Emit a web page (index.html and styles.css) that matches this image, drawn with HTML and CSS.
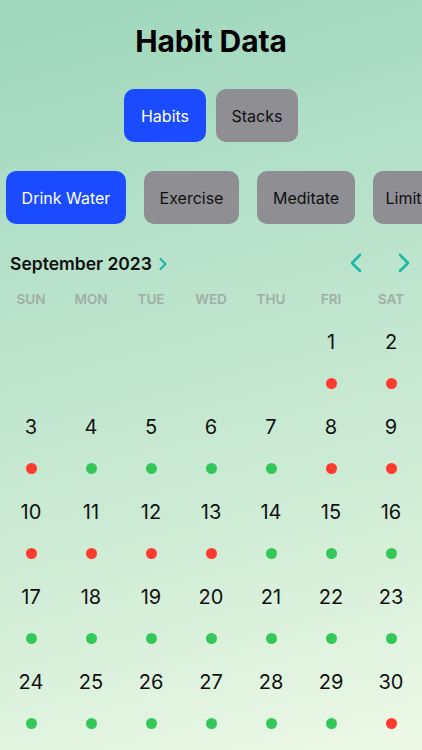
FILE: index.html
```html
<!DOCTYPE html>
<html>
<head>
<meta charset="utf-8">
<link rel="stylesheet" href="styles.css">
</head>
<body>
<div class="page">
  <h1 class="title">Habit Data</h1>
  <div class="segments">
    <div class="btn seg active">Habits</div>
    <div class="btn seg">Stacks</div>
  </div>
  <div class="habits">
    <div class="btn habit active w-drink">Drink Water</div>
    <div class="btn habit w-ex">Exercise</div>
    <div class="btn habit w-med">Meditate</div>
    <div class="btn habit w-lim">Limit Sugar</div>
  </div>
  <div class="month-head">
    <div class="month">September 2023
      <svg class="chev-small" width="10" height="14" viewBox="0 0 10 14"><path d="M2.5 2 L7.5 7 L2.5 12" fill="none" stroke="#1fb7a9" stroke-width="2.2" stroke-linecap="round" stroke-linejoin="round"/></svg>
    </div>
    <div class="nav">
      <svg width="14" height="22" viewBox="0 0 14 22"><path d="M11 3 L3 11 L11 19" fill="none" stroke="#1fb7a9" stroke-width="2.6" stroke-linecap="round" stroke-linejoin="round"/></svg>
      <svg width="14" height="22" viewBox="0 0 14 22"><path d="M3 3 L11 11 L3 19" fill="none" stroke="#1fb7a9" stroke-width="2.6" stroke-linecap="round" stroke-linejoin="round"/></svg>
    </div>
  </div>
  <div class="weekdays">
    <span>SUN</span><span>MON</span><span>TUE</span><span>WED</span><span>THU</span><span>FRI</span><span>SAT</span>
  </div>
  <div class="grid">
    <div class="cell"></div><div class="cell"></div><div class="cell"></div><div class="cell"></div><div class="cell"></div>
    <div class="cell"><span class="num">1</span><span class="dot red"></span></div>
    <div class="cell"><span class="num">2</span><span class="dot red"></span></div>

    <div class="cell"><span class="num">3</span><span class="dot red"></span></div>
    <div class="cell"><span class="num">4</span><span class="dot green"></span></div>
    <div class="cell"><span class="num">5</span><span class="dot green"></span></div>
    <div class="cell"><span class="num">6</span><span class="dot green"></span></div>
    <div class="cell"><span class="num">7</span><span class="dot green"></span></div>
    <div class="cell"><span class="num">8</span><span class="dot red"></span></div>
    <div class="cell"><span class="num">9</span><span class="dot red"></span></div>

    <div class="cell"><span class="num">10</span><span class="dot red"></span></div>
    <div class="cell"><span class="num">11</span><span class="dot red"></span></div>
    <div class="cell"><span class="num">12</span><span class="dot red"></span></div>
    <div class="cell"><span class="num">13</span><span class="dot red"></span></div>
    <div class="cell"><span class="num">14</span><span class="dot green"></span></div>
    <div class="cell"><span class="num">15</span><span class="dot green"></span></div>
    <div class="cell"><span class="num">16</span><span class="dot green"></span></div>

    <div class="cell"><span class="num">17</span><span class="dot green"></span></div>
    <div class="cell"><span class="num">18</span><span class="dot green"></span></div>
    <div class="cell"><span class="num">19</span><span class="dot green"></span></div>
    <div class="cell"><span class="num">20</span><span class="dot green"></span></div>
    <div class="cell"><span class="num">21</span><span class="dot green"></span></div>
    <div class="cell"><span class="num">22</span><span class="dot green"></span></div>
    <div class="cell"><span class="num">23</span><span class="dot green"></span></div>

    <div class="cell"><span class="num">24</span><span class="dot green"></span></div>
    <div class="cell"><span class="num">25</span><span class="dot green"></span></div>
    <div class="cell"><span class="num">26</span><span class="dot green"></span></div>
    <div class="cell"><span class="num">27</span><span class="dot green"></span></div>
    <div class="cell"><span class="num">28</span><span class="dot green"></span></div>
    <div class="cell"><span class="num">29</span><span class="dot green"></span></div>
    <div class="cell"><span class="num">30</span><span class="dot red"></span></div>
  </div>
</div>
</body>
</html>
```

FILE: styles.css
```css
* { box-sizing: border-box; }
html, body { margin: 0; padding: 0; }
body {
  width: 422px;
  height: 750px;
  overflow: hidden;
  font-family: "Inter", "Roboto", "Liberation Sans", sans-serif;
  background: linear-gradient(165deg, #9cd6bb 0%, #b8e2cb 35%, #cdebd4 65%, #edf9e6 100%);
  color: #111;
}
.page {
  display: flex;
  flex-direction: column;
  padding-top: 23px;
}
.title {
  margin: 0;
  text-align: center;
  font-size: 30px;
  line-height: 36px;
  font-weight: 700;
  color: #000;
  letter-spacing: -0.1px;
}
.segments {
  display: flex;
  justify-content: center;
  gap: 10px;
  margin-top: 30px;
}
.btn {
  display: flex;
  align-items: center;
  justify-content: center;
  height: 53px;
  border-radius: 10px;
  background: #8e8e93;
  color: #111;
  font-size: 16px;
  flex-shrink: 0;
}
.btn.active {
  background: #1a4bff;
  color: #fff;
}
.seg { width: 82px; }
.habits {
  display: flex;
  gap: 18px;
  margin-top: 29px;
  padding-left: 6px;
  overflow: hidden;
  white-space: nowrap;
}
.w-drink { width: 120px; }
.w-ex { width: 95px; }
.w-med { width: 98px; }
.w-lim { width: 110px; }
.month-head {
  display: flex;
  justify-content: space-between;
  align-items: center;
  height: 24px;
  margin-top: 27px;
  padding: 0 10px 0 10px;
}
.month {
  display: flex;
  align-items: center;
  gap: 6px;
  font-size: 17.5px;
  font-weight: 600;
  color: #111;
}
.chev-small { margin-top: 1px; }
.nav {
  display: flex;
  gap: 34px;
  align-items: center;
  margin-right: 1px;
}
.weekdays {
  display: grid;
  grid-template-columns: repeat(7, 60px);
  padding-left: 1px;
  margin-top: 14px;
  height: 20px;
  align-items: center;
}
.weekdays span {
  text-align: center;
  font-size: 13.5px;
  font-weight: 600;
  color: #9eaea6;
}
.grid {
  display: grid;
  grid-template-columns: repeat(7, 60px);
  grid-auto-rows: 85px;
  padding-left: 1px;
  margin-top: 21px;
}
.cell {
  display: flex;
  flex-direction: column;
  align-items: center;
}
.num {
  font-size: 20px;
  line-height: 24px;
  height: 24px;
  color: #111;
}
.dot {
  width: 11px;
  height: 11px;
  border-radius: 50%;
  margin-top: 24px;
}
.red { background: #ff3b30; }
.green { background: #34c759; }
```
